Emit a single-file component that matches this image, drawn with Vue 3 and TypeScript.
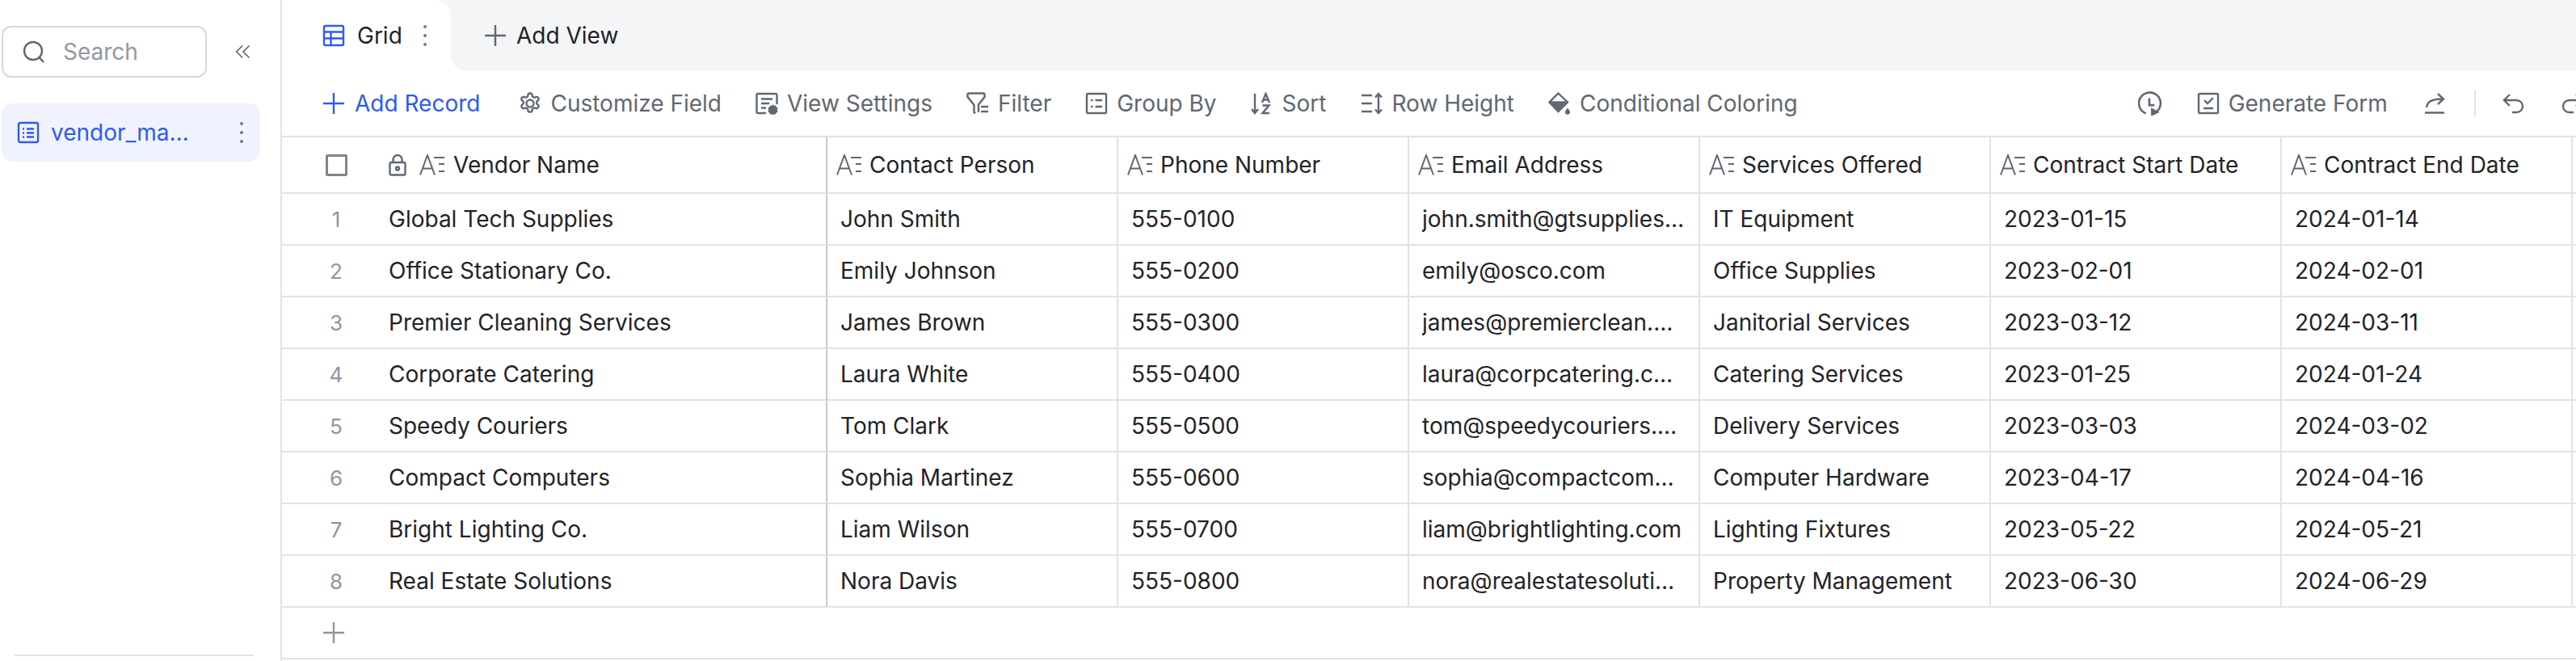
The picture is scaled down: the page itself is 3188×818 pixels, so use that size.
<template>
  <div class="page">
    <aside class="sidebar">
      <div class="search-row">
        <div class="search">
          <svg class="ico" viewBox="0 0 28 28"><circle cx="13" cy="13" r="11" /><path d="M20.5 21l5.5 6" /></svg>
          <span>Search</span>
        </div>
        <svg class="collapse" viewBox="0 0 24 24"><path d="M11 3 2 12l9 9M21 3l-9 9 9 9" /></svg>
      </div>
      <div class="table-item">
        <svg class="ico" viewBox="0 0 28 28">
          <rect x="2" y="2" width="24" height="24" rx="2" />
          <path d="M7 9.500h2M12 9.500h9M7 14.500h2M12 14.500h9M7 19.500h2M12 19.500h9" />
        </svg>
        <span class="item-name">vendor_management</span>
        <span class="dots"><i /><i /><i /></span>
      </div>
      <div class="side-foot" />
    </aside>

    <main class="main">
      <div class="tabs">
        <div class="tab-wrap">
          <div class="tab">
            <svg class="ico blue" viewBox="0 0 28 28">
              <rect x="2" y="2" width="24" height="24" rx="1.500" />
              <path d="M2 9.500h24M2 17.500h24M10.500 9.500V26" />
            </svg>
            <span class="tab-name">Grid</span>
            <span class="dots"><i /><i /><i /></span>
          </div>
        </div>
        <div class="tab-rest">
          <svg class="ico" viewBox="0 0 28 28"><path d="M14 1v26M1 14h26" /></svg>
          <span>Add View</span>
        </div>
      </div>

      <div class="toolbar">
        <div class="tool add">
          <svg class="ico" viewBox="0 0 28 28"><path d="M14 1v26M1 14h26" /></svg>
          <span>Add Record</span>
        </div>
        <div v-for="t in leftTools" :key="t.label" class="tool">
          <svg class="ico" viewBox="0 0 28 28">
            <path v-for="d in t.paths" :key="d" :d="d" />
            <path v-for="d in t.fills" :key="d" class="solid" :d="d" />
          </svg>
          <span>{{ t.label }}</span>
        </div>
        <div class="right-tools">
          <svg class="ico hist" viewBox="0 0 28 28">
            <path d="M9 25.500A12.500 12.500 0 1 1 22 23" />
            <path d="M13 8v8h6" />
            <path class="solid" d="M15 19l10 5-10 5z" />
          </svg>
          <div class="tool gen">
            <svg class="ico" viewBox="0 0 28 28">
              <rect x="2" y="2" width="24" height="24" rx="1.500" />
              <path d="M9 10l4 4 7-7M8 20h12" />
            </svg>
            <span>Generate Form</span>
          </div>
          <svg class="ico share" viewBox="0 0 28 28">
            <path d="M4 19C5 12 10 8.500 24 8.500M18 2l7 6.500-7 6.500M2 25.500h24" />
          </svg>
          <span class="divider" />
          <svg class="ico undo" viewBox="0 0 28 28">
            <path d="M9 3 2 10l7 7M3 10h14c5 0 8 3.500 8 7.500S22 25 17 25h-5" />
          </svg>
          <svg class="ico redo" viewBox="0 0 28 28">
            <path d="M19 3l7 7-7 7M25 10H11c-5 0-8 3.500-8 7.500S6 25 11 25h5" />
          </svg>
          <svg class="ico find" viewBox="0 0 28 28">
            <path d="M1 3h26M1 13h6M1 23h6" />
            <circle cx="19" cy="15" r="8" />
          </svg>
        </div>
      </div>

      <div class="grid">
        <div class="cell frozen head">
          <span class="row-no"><span class="check" /></span>
          <svg class="lock" viewBox="0 0 22 27">
            <rect x="1.500" y="10" width="19" height="15.500" rx="2" />
            <path d="M5.500 10V6.500a5.500 5.500 0 0 1 11 0V10" />
            <circle cx="11" cy="17.500" r="2" />
          </svg>
          <svg class="field-ico" viewBox="0 0 32 26">
            <path d="M1 25.500 10 1l9 24.500M4 17.500h12M18 4h13M24 12h7M24 21h7" />
          </svg>
          <span class="label">Vendor Name</span>
        </div>
        <div v-for="h in headers" :key="h" class="cell head">
          <svg class="field-ico" viewBox="0 0 32 26">
            <path d="M1 25.500 10 1l9 24.500M4 17.500h12M18 4h13M24 12h7M24 21h7" />
          </svg>
          <span class="label">{{ h }}</span>
        </div>
        <div class="cell head blank" />

        <template v-for="(r, i) in rows" :key="r[0]">
          <div class="cell frozen">
            <span class="row-no num">{{ i + 1 }}</span>
            <span class="text">{{ r[0] }}</span>
          </div>
          <div v-for="c in r.slice(1)" :key="c" class="cell">
            <span class="text">{{ c }}</span>
          </div>
          <div class="cell blank" />
        </template>

        <div class="add-row">
          <svg class="ico plus" viewBox="0 0 28 28"><path d="M14 1v26M1 14h26" /></svg>
        </div>
      </div>
    </main>
  </div>
</template>

<script setup lang="ts">
interface Tool {
  label: string;
  paths: string[];
  fills: string[];
}

const leftTools: Tool[] = [
  {
    label: 'Customize Field',
    paths: [
      'M14.300 1.500h-.6a2.300 2.300 0 0 0-2.300 2.300v.2a2.300 2.300 0 0 1-1.200 2l-.5.300a2.300 2.300 0 0 1-2.300 0l-.2-.1a2.300 2.300 0 0 0-3.200.8l-.3.400a2.300 2.300 0 0 0 .9 3.200l.2.100a2.300 2.300 0 0 1 1.100 2v.6a2.300 2.300 0 0 1-1.100 2l-.2.100a2.300 2.300 0 0 0-.9 3.200l.3.400a2.300 2.300 0 0 0 3.200.9l.2-.1a2.300 2.300 0 0 1 2.300 0l.5.300a2.300 2.300 0 0 1 1.200 2v.2a2.300 2.300 0 0 0 2.300 2.300h.6a2.300 2.300 0 0 0 2.300-2.300v-.2a2.300 2.300 0 0 1 1.200-2l.5-.3a2.300 2.300 0 0 1 2.300 0l.2.100a2.300 2.300 0 0 0 3.200-.9l.3-.4a2.300 2.300 0 0 0-.9-3.200l-.2-.1a2.300 2.300 0 0 1-1.100-2v-.6a2.300 2.300 0 0 1 1.100-2l.2-.1a2.300 2.300 0 0 0 .9-3.200l-.3-.4a2.300 2.300 0 0 0-3.200-.8l-.2.100a2.300 2.300 0 0 1-2.300 0l-.5-.3a2.300 2.300 0 0 1-1.200-2v-.2a2.300 2.300 0 0 0-2.300-2.300z',
      'M18.500 14a4.500 4.500 0 1 1-9 0 4.500 4.500 0 0 1 9 0z',
    ],
    fills: [],
  },
  {
    label: 'View Settings',
    paths: ['M13 26H3a1.500 1.500 0 0 1-1.500-1.500v-21A1.500 1.500 0 0 1 3 2h22a1.500 1.500 0 0 1 1.500 1.500V15', 'M7 8.500h14M7 14h10M7 19.500h6'],
    fills: ['M21.500 15l1.200 1.800 2.200-.4.900 2 1.700 1.200-.7 2.400.7 2.400-1.700 1.200-.9 2-2.200-.4-1.200 1.800-1.200-1.800-2.200.4-.9-2-1.700-1.200.7-2.400-.7-2.400 1.700-1.200.9-2 2.200.4z'],
  },
  {
    label: 'Filter',
    paths: ['M11 26.500 9.500 25V16L1.500 6V3a1.500 1.500 0 0 1 1.500-1.500h18A1.500 1.500 0 0 1 22.500 3v3L15 15.500V25', 'M18 18h9M18 24h9'],
    fills: [],
  },
  {
    label: 'Group By',
    paths: ['M3.500 2h21A1.500 1.500 0 0 1 26 3.500v21a1.500 1.500 0 0 1-1.500 1.500h-21A1.500 1.500 0 0 1 2 24.500v-21A1.500 1.500 0 0 1 3.500 2z', 'M7 10h2.500M12.500 10H21M7 18h2.500M12.500 18H21'],
    fills: [],
  },
  {
    label: 'Sort',
    paths: ['M5 2v24M1 21l4 5 4-5', 'M14 13 18.500 2 23 13M15.500 9.500h6', 'M14.500 16.500h8l-8 9.500h8.500'],
    fills: [],
  },
  {
    label: 'Row Height',
    paths: ['M1 4h13M1 14h13M1 24h13', 'M22 2v24M18 6.500 22 2l4 4.500M18 21.500 22 26l4-4.500'],
    fills: [],
  },
  {
    label: 'Conditional Coloring',
    paths: ['M12.500 1.500 24 12.500 12.500 24 1.500 12.500z', 'M2 12.500h22'],
    fills: ['M3 13h19L12.500 23z M24 19.500c1.800 2.400 3 3.700 3 5.200a3 3 0 0 1-6 0c0-1.500 1.200-2.800 3-5.200z'],
  },
];

const headers: string[] = [
  'Contact Person',
  'Phone Number',
  'Email Address',
  'Services Offered',
  'Contract Start Date',
  'Contract End Date',
];

const rows: string[][] = [
  ['Global Tech Supplies', 'John Smith', '555-0100', 'john.smith@gtsupplies.com', 'IT Equipment', '2023-01-15', '2024-01-14'],
  ['Office Stationary Co.', 'Emily Johnson', '555-0200', 'emily@osco.com', 'Office Supplies', '2023-02-01', '2024-02-01'],
  ['Premier Cleaning Services', 'James Brown', '555-0300', 'james@premierclean.com', 'Janitorial Services', '2023-03-12', '2024-03-11'],
  ['Corporate Catering', 'Laura White', '555-0400', 'laura@corpcatering.com', 'Catering Services', '2023-01-25', '2024-01-24'],
  ['Speedy Couriers', 'Tom Clark', '555-0500', 'tom@speedycouriers.com', 'Delivery Services', '2023-03-03', '2024-03-02'],
  ['Compact Computers', 'Sophia Martinez', '555-0600', 'sophia@compactcomputers.com', 'Computer Hardware', '2023-04-17', '2024-04-16'],
  ['Bright Lighting Co.', 'Liam Wilson', '555-0700', 'liam@brightlighting.com', 'Lighting Fixtures', '2023-05-22', '2024-05-21'],
  ['Real Estate Solutions', 'Nora Davis', '555-0800', 'nora@realestatesolutions.com', 'Property Management', '2023-06-30', '2024-06-29'],
];
</script>

<style>
html,
body {
  margin: 0;
  background: #fff;
  overflow: hidden;
}
</style>

<style scoped>
.page {
  display: flex;
  width: 3188px;
  height: 818px;
  overflow: hidden;
  font-family: Inter, 'Liberation Sans', sans-serif;
  font-size: 28px;
  color: #1f2329;
}

.sidebar {
  position: relative;
  flex: 0 0 345px;
  padding: 32px 0 0 2px;
  box-sizing: border-box;
  border-right: 2px solid #e1e2e5;
  box-sizing: content-box;
  width: 343px;
}

.ico {
  flex: none;
  width: 28px;
  height: 28px;
  fill: none;
  stroke: currentColor;
  stroke-width: 2.400;
}

.ico .solid,
.solid {
  fill: currentColor;
  stroke: none;
}

.search-row {
  display: flex;
  align-items: center;
}

.search {
  display: flex;
  align-items: center;
  gap: 22px;
  box-sizing: border-box;
  width: 254px;
  height: 64px;
  padding-left: 24px;
  border: 2px solid #d6d7da;
  border-radius: 12px;
  color: #9298a2;
}

.search .ico {
  color: #606772;
}

.collapse {
  width: 24px;
  height: 20px;
  margin-left: 33px;
  fill: none;
  stroke: #606772;
  stroke-width: 2;
}

.table-item {
  display: flex;
  align-items: center;
  box-sizing: border-box;
  width: 320px;
  height: 72px;
  margin-top: 32px;
  padding-left: 19px;
  border-radius: 14px;
  background: #f0f3fe;
  color: #2e5bf0;
}

.item-name {
  width: 186px;
  margin-left: 14px;
  overflow: hidden;
  white-space: nowrap;
  text-overflow: ellipsis;
}

.dots {
  display: flex;
  flex-direction: column;
  gap: 7px;
  align-items: center;
}

.dots i {
  width: 4px;
  height: 4px;
  border-radius: 50%;
  background: #737a85;
}

.table-item .dots {
  margin-left: 48px;
}

.side-foot {
  position: absolute;
  left: 18px;
  right: 33px;
  bottom: 6px;
  height: 2px;
  background: #e1e2e5;
}

.main {
  flex: 1;
  min-width: 0;
  overflow: hidden;
}

.tabs {
  display: flex;
  height: 88px;
}

.tab-wrap {
  flex: none;
  background: #f4f5f7;
}

.tab {
  display: flex;
  align-items: center;
  box-sizing: border-box;
  width: 209px;
  height: 88px;
  padding: 0 0 0 50px;
  background: #fff;
  border-top-right-radius: 20px;
}

.tab-name {
  margin-left: 15px;
}

.tab .dots {
  margin-left: 26px;
}

.blue {
  color: #2e5bf0;
}

.tab-rest {
  display: flex;
  flex: 1;
  align-items: center;
  gap: 12px;
  padding-left: 41px;
  background: #f4f5f7;
  border-bottom-left-radius: 20px;
}

.tab-rest .ico {
  color: #606772;
}

.toolbar {
  display: flex;
  align-items: center;
  gap: 42px;
  height: 80px;
  padding-left: 50px;
  color: #606772;
  white-space: nowrap;
}

.tool {
  display: flex;
  flex: none;
  align-items: center;
  gap: 11px;
}

.add {
  gap: 12px;
  margin-right: 6px;
  color: #2e5bf0;
}

.right-tools {
  display: flex;
  flex: none;
  align-items: center;
  margin-left: 379px;
}

.hist {
  width: 30px;
  height: 30px;
}

.gen {
  margin-left: 43px;
}

.share {
  margin-left: 44px;
}

.divider {
  width: 2px;
  height: 32px;
  margin: 0 33px 0 35px;
  background: #e1e2e5;
}

.redo {
  margin-left: 44px;
}

.find {
  margin-left: 68px;
}

.grid {
  display: grid;
  grid-template-columns: 675px repeat(6, 360px) 100px;
  grid-auto-rows: 64px;
  grid-template-rows: 70px;
  border-top: 2px solid #e1e2e5;
}

.cell {
  display: flex;
  align-items: center;
  box-sizing: border-box;
  min-width: 0;
  padding: 0 16px;
  border-right: 2px solid #e1e2e5;
  border-bottom: 2px solid #e1e2e5;
}

.head {
  gap: 9px;
  padding-left: 11px;
}

.cell.frozen {
  padding-left: 0;
  border-right-color: #c9cace;
}

.frozen.head {
  gap: 0;
}

.blank {
  border-right: none;
}

.row-no {
  display: flex;
  flex: none;
  justify-content: center;
  width: 134px;
  margin-right: -2px;
}

.num {
  color: #8f959e;
  font-size: 26px;
}

.check {
  box-sizing: border-box;
  width: 27px;
  height: 27px;
  border: 3px solid #7f848c;
  border-radius: 2px;
}

.lock {
  flex: none;
  width: 22px;
  height: 27px;
  margin-right: 16px;
  fill: none;
  stroke: #606772;
  stroke-width: 2.400;
}

.field-ico {
  flex: none;
  width: 32px;
  height: 26px;
  fill: none;
  stroke: #606772;
  stroke-width: 2;
}

.frozen .label {
  margin-left: 10px;
}

.text {
  overflow: hidden;
  white-space: nowrap;
  text-overflow: ellipsis;
}

.add-row {
  display: flex;
  grid-column: 1 / -1;
  align-items: center;
  padding-left: 50px;
  border-bottom: 2px solid #e1e2e5;
}

.plus {
  color: #8f959e;
}
</style>
